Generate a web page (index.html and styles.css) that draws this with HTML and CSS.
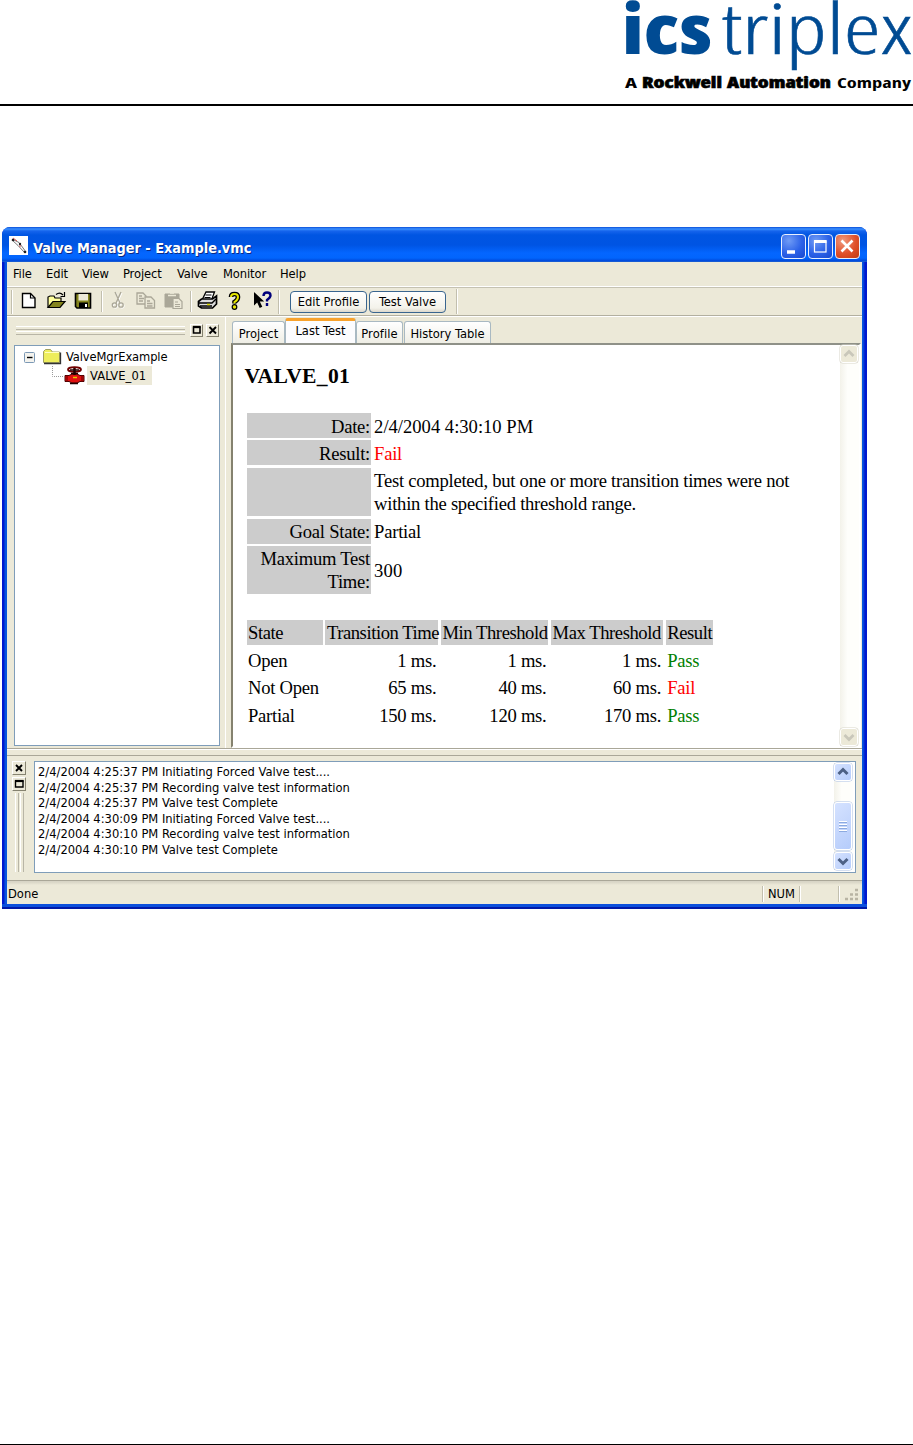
FILE: index.html
```
<!DOCTYPE html>
<html lang="en">
<head>
<meta charset="utf-8">
<title>Valve Manager</title>
<link rel="stylesheet" href="styles.css">
</head>
<body>
<header class="page-head">
  <svg class="logo" width="303" height="104" viewBox="610 0 303 104">
    <g fill="#004b93">
      <text class="logo-bold" x="622" y="54" textLength="90" lengthAdjust="spacingAndGlyphs">ics</text>
      <text class="logo-thin" x="721" y="54" textLength="191" lengthAdjust="spacingAndGlyphs">triplex</text>
    </g>
    <g class="logo-tag">
      <text class="tag-bold" x="625" y="88" textLength="12" lengthAdjust="spacingAndGlyphs">A</text>
      <text class="tag-black" x="642" y="88" textLength="80" lengthAdjust="spacingAndGlyphs">Rockwell</text>
      <text class="tag-black" x="727" y="88" textLength="104" lengthAdjust="spacingAndGlyphs">Automation</text>
      <text class="tag-bold" x="837" y="88" textLength="74" lengthAdjust="spacingAndGlyphs">Company</text>
    </g>
  </svg>
</header>

<main class="window">
  <div class="titlebar">
    <svg class="app-icon" width="19" height="19" viewBox="0 0 19 19"><rect width="19" height="19" fill="#fff"/><path d="M3 3 10 6.500 17 16M3 4 9 9.500 16 17" stroke="#777" stroke-width="1" fill="none"/><path d="M4 2 8 5M11 8v3" stroke="#d55" stroke-width="1"/><circle cx="4" cy="4" r="1.300" fill="#222"/><circle cx="11" cy="8" r="1.200" fill="#222"/><circle cx="16" cy="16" r="1.300" fill="#222"/></svg>
    <span class="title">Valve Manager - Example.vmc</span>
    <div class="caption-buttons">
      <span class="cap"><svg width="25" height="25"><path d="M6 18h8" stroke="#fff" stroke-width="3.5"/></svg></span>
      <span class="cap"><svg width="25" height="25"><rect x="6.500" y="7" width="11.500" height="11" fill="none" stroke="#fff" stroke-width="1.200"/><path d="M6 7.500h12.500" stroke="#fff" stroke-width="3"/></svg></span>
      <span class="cap close"><svg width="25" height="25"><path d="M6.500 6.500 17.500 17.500M17.500 6.500 6.500 17.500" stroke="#fff" stroke-width="2.600"/></svg></span>
    </div>
  </div>

  <nav class="menu">
    <span class="m-file">File</span><span class="m-edit">Edit</span><span class="m-view">View</span><span class="m-project">Project</span><span class="m-valve">Valve</span><span class="m-monitor">Monitor</span><span>Help</span>
  </nav>

  <div class="toolbar">
    <svg class="tools" width="277" height="27" viewBox="7 288 277 27">
      <path d="M11.500 290v24M101.500 291v21M190.500 291v21M278.500 290v24" stroke="#c2bfae"/>
      <path d="M12.500 290v24M102.500 291v21M191.500 291v21M279.500 290v24" stroke="#fff"/>
      <path d="M22.500 293.500h8l4.500 4.500v9.500H22.500z" fill="#fff" stroke="#000" stroke-width="1.400"/><path d="M30.500 293.500v4.500H35" fill="none" stroke="#000" stroke-width="1.200"/>
      <path d="M48 307v-10l2-1h4l1 2h6v4" fill="#ffff9c" stroke="#000" stroke-width="1.200"/><path d="M48 307.500l5-6h12l-5 6z" fill="#84841c" stroke="#000" stroke-width="1.200"/><path d="M56 294.500q4-3 7 0.500M64.500 292v4.500h-4" fill="none" stroke="#000" stroke-width="1.200"/>
      <path d="M75.500 293.500h15v14.500h-13.500l-1.500-1.500z" fill="#84841c" stroke="#000" stroke-width="1.600"/><rect x="78.500" y="294" width="9.500" height="6.500" fill="#ece9d8"/><rect x="79" y="302.500" width="9" height="5.500" fill="#000"/><rect x="85" y="304" width="2" height="3" fill="#fff"/>
      <g fill="none" stroke="#fff" transform="translate(1 1)"><path d="M115 292l5 11M121 292l-5 11"/><circle cx="114.500" cy="305" r="2.200"/><circle cx="121" cy="305" r="2.200"/></g>
      <g fill="none" stroke="#aaa798" stroke-width="1.300"><path d="M115 292l5 11M121 292l-5 11"/><circle cx="114.500" cy="305" r="2.200"/><circle cx="121" cy="305" r="2.200"/></g>
      <g fill="#ece9d8" stroke="#aaa798" stroke-width="1.300"><path d="M137 293h6l3 3v8h-9z"/><path d="M145 297h6l3.500 3.500v7.500H145z"/><path d="M139 296h3M139 298.500h5M139 301h4M147 301h3M147 303.500h5.500M147 306h5.500"/></g>
      <path d="M165 294h14v13h-14z" fill="#aaa798" stroke="#aaa798"/><path d="M168 295.500h8M170 293h4" stroke="#ece9d8" stroke-width="1.500"/><path d="M173 298.500h6l3 3v7h-9z" fill="#ece9d8" stroke="#aaa798" stroke-width="1.200"/><path d="M175 302h3M175 304.500h5M175 306.500h5" stroke="#aaa798"/>
      <path d="M202 300l4-8h8.500l-3 8" fill="#fff" stroke="#000" stroke-width="1.300"/><path d="M205.500 295h6M204.500 297.500h6" stroke="#000"/><path d="M198.500 301.500l3-2.500h11l4-3v8l-4 4h-11l-3-2z" fill="#ddd" stroke="#000" stroke-width="1.700"/><path d="M199 303h13l4-4M200 306h12" stroke="#000" stroke-width="1.400" fill="none"/><path d="M207 304.500h3" stroke="#dd0" stroke-width="1.500"/>
      <path d="M231 297q0-3 3.500-3 3.500 0 3.500 3t-3.500 5v1.500" fill="none" stroke="#000" stroke-width="4.600"/><path d="M231 297q0-3 3.500-3 3.500 0 3.500 3t-3.500 5v1.200" fill="none" stroke="#e6e600" stroke-width="2"/><circle cx="234.500" cy="307" r="2.300" fill="#e6e600" stroke="#000" stroke-width="1.200"/>
      <path d="M254 292v13.500l3.200-3 2.500 5.500 2.600-1.200-2.500-5.200h4.400z"/><path d="M263.500 296q0-3.500 3.500-3.500t3.500 3q0 2-3.500 4.500v1.500M267 303v3" fill="none" stroke="#00007b" stroke-width="2.400"/>
    </svg>
    <button class="tool-button edit">Edit Profile</button>
    <button class="tool-button test">Test Valve</button>
    <i class="tool-end"></i>
  </div>

  <div class="workspace">
    <aside class="dock">
      <div class="dock-head">
        <div class="grip"><i></i><i></i></div>
        <span class="mini"><svg width="12" height="12"><path d="M2.500 3h6.500v6H2.500z" fill="none" stroke="#000" stroke-width="1.600"/><path d="M2 3h7.500" stroke="#000" stroke-width="2.300"/></svg></span>
        <span class="mini"><svg width="12" height="12"><path d="M2.500 3 9 9.500M9 3 2.500 9.500" stroke="#000" stroke-width="1.900"/></svg></span>
      </div>
      <div class="tree">
        <div class="tree-row">
          <svg width="47" height="20" viewBox="15 347 47 20"><rect x="24.500" y="352.500" width="10" height="10" rx="1" fill="#f4f3ee" stroke="#7b98b5"/><path d="M27 357.500h5.500" stroke="#000" stroke-width="1.400"/><path d="M43.500 362.500v-11l2-2h5l2 2.500h7v10.500z" fill="#eeee5c" stroke="#a0a060"/><path d="M44 363.500h16.500v-11" fill="none" stroke="#333" stroke-width="1.300"/><path d="M45 352.500h14" stroke="#ffffc4"/></svg>
          <span class="root">ValveMgrExample</span>
        </div>
        <div class="tree-row second">
          <svg width="73" height="20" viewBox="15 366 73 20"><path d="M52.500 366v10.500H64" fill="none" stroke="#999" stroke-dasharray="1 1"/><path d="M65 375.500h4l3-1.500h5l3 1.500h4v6h-4l-3 1.500h-5l-3-1.500h-4z" fill="#e01010" stroke="#400" stroke-width="1"/><path d="M67 375v7M82 375v7" stroke="#700" stroke-width="1.200"/><ellipse cx="74.500" cy="369.500" rx="6.500" ry="2.300" fill="#fff" stroke="#700000" stroke-width="1.800"/><path d="M74.500 368v7" stroke="#200" stroke-width="2.500"/><path d="M70 370h9M71 373.500h7M70 383.500h8" stroke="#200" stroke-width="1.500"/><path d="M73 377.500h4" stroke="#e5c800" stroke-width="1.500"/></svg>
          <span class="node">VALVE_01</span>
        </div>
      </div>
    </aside>

    <section class="view">
      <div class="tabs">
        <span class="tab t1">Project</span><span class="tab active">Last Test</span><span class="tab t3">Profile</span><span class="tab t4">History Table</span>
      </div>
      <div class="report-frame">
        <article class="report">
          <h1>VALVE_01</h1>
          <div class="summary">
            <b>Date:</b><span class="stamp">2/4/2004 4:30:10 PM</span>
            <b>Result:</b><span class="fail">Fail</span>
            <b></b><span>Test completed, but one or more transition times were not<br>within the specified threshold range.</span>
            <b>Goal State:</b><span>Partial</span>
            <b>Maximum Test<br>Time:</b><span class="mid">300</span>
          </div>
          <div class="results">
            <b>State</b><b>Transition Time</b><b>Min Threshold</b><b>Max Threshold</b><b>Result</b>
            <span>Open</span><span class="num">1 ms.</span><span class="num">1 ms.</span><span class="num">1 ms.</span><span class="pass">Pass</span>
            <span>Not Open</span><span class="num">65 ms.</span><span class="num">40 ms.</span><span class="num">60 ms.</span><span class="fail">Fail</span>
            <span>Partial</span><span class="num">150 ms.</span><span class="num">120 ms.</span><span class="num">170 ms.</span><span class="pass">Pass</span>
          </div>
        </article>
        <div class="scroll disabled">
          <span class="arrow"><svg width="18" height="18"><path d="M4.500 11 9 6.500l4.500 4.500" fill="none" stroke="#c9c7ba" stroke-width="2.800"/></svg></span>
          <span class="arrow"><svg width="18" height="18"><path d="M4.500 7 9 11.500 13.500 7" fill="none" stroke="#c9c7ba" stroke-width="2.800"/></svg></span>
        </div>
      </div>
    </section>
  </div>

  <section class="log-dock">
    <div class="log-side">
      <span class="mini"><svg width="12" height="12"><path d="M3 3 9 9M9 3 3 9" stroke="#000" stroke-width="1.900"/></svg></span>
      <span class="mini"><svg width="12" height="12"><path d="M2.500 3h7.500v6H2.500z" fill="none" stroke="#000" stroke-width="1.400"/><path d="M2 3h8.500" stroke="#000" stroke-width="2.200"/></svg></span>
      <div class="vgrip"><i></i><i></i></div>
    </div>
    <div class="log">
      <div class="log-text">
        <div>2/4/2004 4:25:37 PM Initiating Forced Valve test....</div>
        <div>2/4/2004 4:25:37 PM Recording valve test information</div>
        <div>2/4/2004 4:25:37 PM Valve test Complete</div>
        <div>2/4/2004 4:30:09 PM Initiating Forced Valve test....</div>
        <div>2/4/2004 4:30:10 PM Recording valve test information</div>
        <div>2/4/2004 4:30:10 PM Valve test Complete</div>
      </div>
      <div class="scroll">
        <span class="arrow"><svg width="18" height="18"><path d="M4.500 11 9 6.500l4.500 4.500" fill="none" stroke="#4d6185" stroke-width="3"/></svg></span>
        <span class="thumb"><i></i><i></i><i></i><i></i></span>
        <span class="arrow"><svg width="18" height="18"><path d="M4.500 7 9 11.500 13.500 7" fill="none" stroke="#4d6185" stroke-width="3"/></svg></span>
      </div>
    </div>
  </section>

  <footer class="status">
    <span class="done">Done</span><span class="pane num-lock">NUM</span><span class="pane blank"></span>
    <span class="pane size"><svg width="20" height="21"><path d="M16 8h3M11 12.500h3M16 12.500h3M6 17h3M11 17h3M16 17h3" stroke="#b8b4a3" stroke-width="2.600"/></svg></span>
  </footer>
</main>
<hr class="page-foot">
</body>
</html>
```
FILE: styles.css
```
* { box-sizing: border-box; }
body {
  margin: 0;
  height: 1445px;
  background: #fff;
  display: flex;
  flex-direction: column;
  overflow: hidden;
  color: #000;
  font: 12.8px/16px "DejaVu Sans Condensed", "DejaVu Sans", sans-serif;
  font-stretch: condensed;
}
span, button, b { white-space: nowrap; }
svg { display: block; flex: none; }

.page-head { height: 106px; border-bottom: 2px solid #000; display: flex; justify-content: flex-end; }
.logo { overflow: visible; }
.logo text { font-family: "Open Sans", sans-serif; }
.logo .logo-bold { font-size: 69px; font-weight: 800; }
.logo .logo-thin { font-size: 70px; font-weight: 300; stroke: #004b93; stroke-width: .5px; }
.logo .tag-bold { font-size: 15px; font-weight: 700; }
.logo .tag-black { font-size: 15px; font-weight: 800; stroke: #000; stroke-width: .5px; }

.window {
  width: 865px;
  height: 682px;
  margin: 121px 0 0 2px;
  padding: 0 5px 5px;
  border-radius: 8px 8px 0 0;
  background: linear-gradient(90deg, #0019cf 0 2px, #0855dd 3px 5px, #0855dd calc(100% - 5px) calc(100% - 4px), #0019cf calc(100% - 2px));
  box-shadow: inset 0 -2px #0019a8, inset 0 -5px #0b4fdc;
  display: flex;
  flex-direction: column;
}
.titlebar {
  height: 35px;
  margin: 0 -5px;
  padding: 0 7px;
  border-radius: 8px 8px 0 0;
  background: linear-gradient(#0a4fd8 0, #3a90ff 2px, #1664ec 4px, #0055e2 8px, #0054e3 18px, #0466ff 26px, #0265fd 31px, #0048d8 34px, #2a6bd0);
  display: flex;
  align-items: center;
  gap: 5px;
}
.app-icon { margin-bottom: -2px; }
.title {
  color: #fff;
  font: bold 14.4px/20px "DejaVu Sans Condensed", "DejaVu Sans", sans-serif;
  font-stretch: condensed;
  letter-spacing: -.02px;
  text-shadow: 1px 1px #0a2a85;
  margin-top: 6px;
}
.caption-buttons { display: flex; gap: 2px; margin-left: auto; margin-top: 4px; }
.cap {
  width: 25px;
  height: 25px;
  border: 1.5px solid #e8f0ff;
  border-radius: 4px;
  background: radial-gradient(circle at 30% 25%, #6f9bf5, #2c62e8 55%, #1748cf);
}
.cap svg { margin: -1px; }
.cap.close { background: radial-gradient(circle at 30% 25%, #f09a7e, #e0502a 55%, #c23a10); }

.menu {
  height: 25px;
  flex: none;
  background: #ece9d8;
  border-bottom: 1px solid #fff;
  padding: 4px 6px 0;
  display: flex;
}
.m-file { width: 33px; }
.m-edit { width: 36px; }
.m-view { width: 41px; }
.m-project { width: 54px; }
.m-valve { width: 46px; }
.m-monitor { width: 57px; }
.menu span { letter-spacing: -.1px; }

.toolbar {
  height: 29px;
  flex: none;
  background: #ece9d8;
  border-top: 1px solid #c5c2b2;
  border-bottom: 1px solid #b3b0a0;
  display: flex;
  align-items: flex-start;
}
.tool-button {
  height: 22px;
  margin: 3px 2px 0 0;
  padding: 0;
  border: 1.5px solid #39658f;
  border-radius: 4px;
  background: linear-gradient(#fff, #f3f2ea 80%, #dcd8cb);
  font: inherit;
  color: #000;
}
.edit { width: 77px; margin-left: 6px; }
.test { width: 77px; }
.tool-end { width: 2px; height: 25px; margin: 1px 0 0 8px; border-left: 1px solid #c2bfae; border-right: 1px solid #fff; }

.workspace { height: 433px; flex: none; display: flex; background: #ece9d8; border-top: 1px solid #fff; border-bottom: 1px solid #aaa798; }
.dock { width: 219px; padding: 6px 6px 0 7px; border-right: 1px solid #fff; }
.dock-head { height: 14px; display: flex; align-items: center; gap: 3px; }
.grip { width: 171px; display: flex; flex-direction: column; gap: 1px; margin: 0 2px 0 2px; }
.grip i { height: 4px; border-top: 1px solid #fff; border-bottom: 1.5px solid #b8b5a6; }
.mini { width: 13px; height: 13px; border: 1px solid; border-color: #fff #85826f #85826f #fff; flex: none; }
.mini svg { margin: -.5px; }
.tree { width: 206px; height: 401px; margin-top: 8px; border: 1px solid #7f9db9; background: #fff; padding-top: 1px; }
.tree-row { display: flex; height: 19px; align-items: center; }
.root { margin-left: 4px; letter-spacing: -.1px; }
.node { width: 65px; margin-left: -1px; padding-left: 3px; height: 19px; line-height: 19px; background: #ece9d8; letter-spacing: .1px; }

.view { width: 630px; margin-left: 5px; padding-top: 1px; display: flex; flex-direction: column; }
.tabs { height: 25px; display: flex; align-items: flex-end; padding-left: 1px; }
.tab {
  height: 22px;
  border: 1px solid #a9b9c2;
  border-bottom: 0;
  border-radius: 3px 3px 0 0;
  background: linear-gradient(#fff, #efeee5);
  text-align: center;
  line-height: 23px;
}
.t1 { width: 53px; }
.active { width: 71px; height: 25px; background: #fcfcfe; border-top: 3px solid #f8a22c; line-height: 20px; }
.t3 { width: 47px; letter-spacing: .1px; }
.t4 { width: 87px; margin-left: 1px; }
.report-frame { flex: 1; border: 2px solid #7c796a; border-color: #8f9188 #fff #fff #85826f; background: #fff; display: flex; justify-content: space-between; }
.report { padding: 19px 0 0 11.5px; font: 18.6px/23px "Liberation Serif", serif; letter-spacing: -.25px; }
.report h1 { margin: 0; font-size: 21.6px; line-height: 25px; letter-spacing: .3px; }
.report b { font-weight: 400; background: #ccc; padding: 1.5px 1.5px 0; }
.summary, .results { display: grid; gap: 2.4px 2.6px; margin-left: 2px; }
.summary { margin-top: 24px; grid-template-columns: 124px auto; grid-template-rows: 25px 25px 48.4px 25px 48px; }
.summary > b { text-align: right; padding-right: .5px; }
.summary > span { padding: 1.5px 0 0 1px; }
.summary > .stamp { letter-spacing: 0; }
.summary > .mid { align-self: center; letter-spacing: .1px; }
.results { margin-top: 26px; grid-template-columns: 76.3px 113px 107.5px 112px 47px; grid-auto-rows: 25px; }
.results > b { letter-spacing: -.43px; }
.results > span { padding: 1.5px 1.5px 0; }
.results > .num { text-align: right; padding-right: 2px; }
.report .fail { color: #f00; }
.report .pass { color: #008000; }

.scroll { width: 19px; display: flex; flex-direction: column; justify-content: space-between; background: linear-gradient(90deg, #f3f2ea, #fefefb 40%); }
.arrow, .thumb { width: 18px; border: 1px solid #fff; border-radius: 3px; background: linear-gradient(135deg, #d5e2ff, #b5ccfb); box-shadow: 0 0 0 .5px #aabfe6; }
.arrow { height: 18px; }
.arrow svg { margin: -1px; }
.disabled .arrow { background: #ece9d8; box-shadow: 0 0 0 .5px #d8d6ca; }

.log-dock { height: 131px; flex: none; background: #ece9d8; padding: 11px 0 0 5px; display: flex; border-top: 1px solid #fff; box-shadow: inset 0 5px #ece9d8, inset 0 6px #aaa798; }
.log-side { width: 22px; display: flex; flex-direction: column; gap: 2px; }
.log-side .mini { width: 14px; height: 14px; }
.vgrip { display: flex; height: 79px; gap: 1px; margin: 0 0 0 3px; }
.vgrip i { width: 4px; border-left: 1px solid #fff; border-right: 1.5px solid #b8b5a6; }
.log { width: 822px; height: 112px; border: 1px solid #7f9db9; background: #fff; display: flex; justify-content: space-between; padding: 1px 2px 2px 3px; }
.log-text { line-height: 15.5px; padding-top: 1px; letter-spacing: 0; }
.thumb { height: 48px; margin-top: 19px; display: flex; flex-direction: column; gap: 1px; padding: 18px 0 0 4px; }
.thumb i { width: 8px; height: 2px; border-top: 1px solid #fff; border-bottom: 1px solid #8caae0; }

.status { height: 24px; flex: none; background: linear-gradient(#aaa798 0 1px, #d8d5c6 1px 2px, #ece9d8 5px); display: flex; align-items: center; padding: 4px 0 0 1px; }
.done { width: 754px; }
.pane { height: 16px; border-left: 1px solid #c2bfae; box-shadow: inset 1px 0 #fff; }
.num-lock { width: 37px; padding-left: 5px; }
.blank { width: 39px; }
.size { width: 23px; }
.size svg { margin-top: -4px; }

.page-foot { width: 100%; height: 1px; margin: auto 0 0; border: 0; background: #000; flex: none; }
```
